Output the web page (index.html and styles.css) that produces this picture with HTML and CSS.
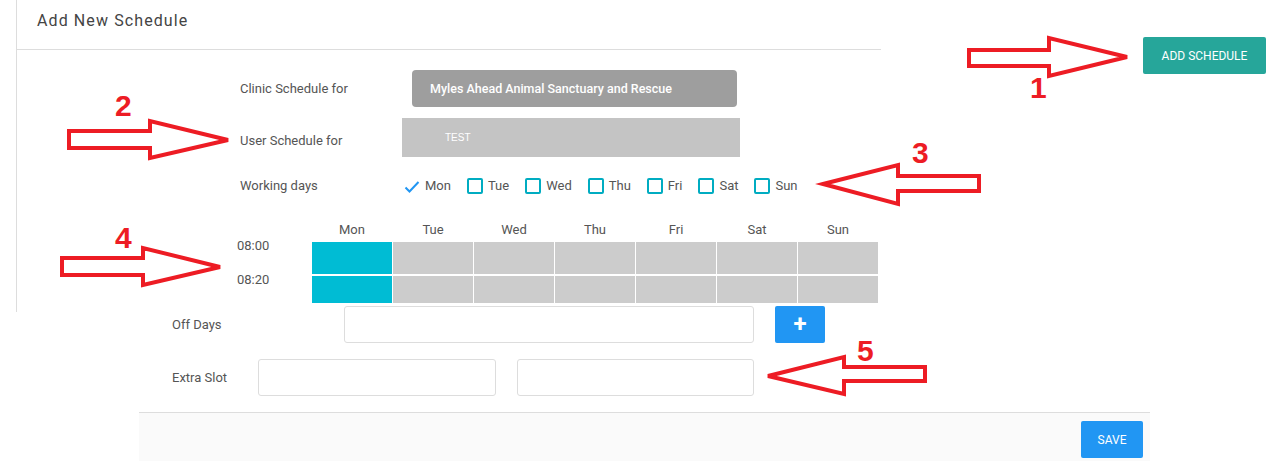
FILE: index.html
```html
<!DOCTYPE html>
<html>
<head>
<meta charset="utf-8">
<title>Add New Schedule</title>
<link rel="stylesheet" href="styles.css">
</head>
<body>
<div class="page">
  <div class="top">
    <section class="panel">
      <div class="panel-head">Add New Schedule</div>
      <div class="panel-body">
        <div class="row row-clinic">
          <div class="label">Clinic Schedule for</div>
          <div class="select-clinic">Myles Ahead Animal Sanctuary and Rescue</div>
        </div>
        <div class="row row-user">
          <div class="label label-user">User Schedule for</div>
          <div class="select-user">TEST</div>
        </div>
        <div class="row row-days">
          <div class="label">Working days</div>
          <div class="days">
            <span class="day"><svg class="tick" width="16" height="16" viewBox="0 0 16 16"><path d="M1.5 9.5 L5.5 13.5 L14.5 4" fill="none" stroke="#2196f3" stroke-width="2"/></svg>Mon</span>
            <span class="day"><span class="box"></span>Tue</span>
            <span class="day"><span class="box"></span>Wed</span>
            <span class="day"><span class="box"></span>Thu</span>
            <span class="day"><span class="box"></span>Fri</span>
            <span class="day"><span class="box"></span>Sat</span>
            <span class="day"><span class="box"></span>Sun</span>
          </div>
        </div>
        <div class="schedule">
          <div class="corner"></div>
          <div class="dh">Mon</div><div class="dh">Tue</div><div class="dh">Wed</div><div class="dh">Thu</div><div class="dh">Fri</div><div class="dh">Sat</div><div class="dh">Sun</div>
          <div class="time">08:00</div>
          <div class="cell on"></div><div class="cell"></div><div class="cell"></div><div class="cell"></div><div class="cell"></div><div class="cell"></div><div class="cell"></div>
          <div class="time">08:20</div>
          <div class="cell on"></div><div class="cell"></div><div class="cell"></div><div class="cell"></div><div class="cell"></div><div class="cell"></div><div class="cell"></div>
        </div>
      </div>
    </section>
    <div class="aside">
      <button class="btn btn-add">ADD SCHEDULE</button>
    </div>
  </div>

  <div class="bottom">
    <div class="frow">
      <div class="flabel flabel-wide">Off Days</div>
      <div class="input input-off"></div>
      <button class="btn btn-plus">+</button>
    </div>
    <div class="frow frow-extra">
      <div class="flabel flabel-narrow">Extra Slot</div>
      <div class="input input-slot"></div>
      <div class="input input-slot2"></div>
    </div>
    <footer class="foot">
      <button class="btn btn-save">SAVE</button>
    </footer>
  </div>
</div>

<svg class="annotations" width="1269" height="461" viewBox="0 0 1269 461">
  <g fill="none" stroke="#ed1c24" stroke-width="4" stroke-linejoin="miter">
    <polygon points="969,50 1049,50 1049,38 1127,57 1049,76 1049,66 969,66"/>
    <polygon points="69,131 150,131 150,121 228,140 150,158 150,148 69,148"/>
    <polygon points="823,184 898,165 898,176 979,176 979,191 898,191 898,204"/>
    <polygon points="62,258 143,258 143,248 220,267 143,285 143,275 62,275"/>
    <polygon points="768,376 844,357 844,367 925,367 925,381 844,381 844,394"/>
  </g>
  <g class="nums" fill="#ed1c24">
    <text x="1030" y="98">1</text>
    <text x="115" y="116">2</text>
    <text x="912" y="163">3</text>
    <text x="115" y="248">4</text>
    <text x="857" y="361">5</text>
  </g>
</svg>
</body>
</html>
```

FILE: styles.css
```css
* { box-sizing: border-box; }

html, body {
  margin: 0;
  padding: 0;
  background: #ffffff;
}

body {
  font-family: Roboto, "Noto Sans", "Liberation Sans", sans-serif;
  font-size: 13px;
  color: #555555;
  width: 1269px;
  height: 461px;
  overflow: hidden;
  position: relative;
}

.page {
  width: 1269px;
}

.top {
  display: flex;
  align-items: flex-start;
}

.panel {
  margin-left: 16px;
  width: 865px;
  height: 312px;
  border-left: 1px solid #dddddd;
  flex: none;
}

.panel-head {
  height: 50px;
  border-bottom: 1px solid #dddddd;
  padding: 9px 0 0 20px;
  font-size: 16px;
  line-height: 24px;
  letter-spacing: 1.1px;
  color: #444444;
}

.panel-body {
  padding-left: 223px;
}

.row {
  display: flex;
  align-items: center;
}

.label {
  width: 172px;
  flex: none;
  line-height: 20px;
  color: #555555;
}

.row-clinic {
  margin-top: 20px;
  height: 37px;
}

.select-clinic {
  width: 325px;
  height: 37px;
  background: #9e9e9e;
  border-radius: 4px;
  color: #ffffff;
  font-weight: 500;
  font-size: 12.5px;
  line-height: 37px;
  padding-left: 18px;
}

.row-user {
  margin-top: 11px;
  height: 39px;
}

.label-user {
  padding-top: 7px;
}

.select-user {
  margin-left: -10px;
  width: 338px;
  height: 39px;
  background: #c4c4c4;
  color: #ffffff;
  font-family: "Liberation Sans", Arial, sans-serif;
  font-size: 10px;
  line-height: 39px;
  padding-left: 43px;
}

.row-days {
  margin-top: 19px;
  height: 20px;
}

.days {
  margin-left: -8px;
  display: flex;
  align-items: center;
  gap: 16px;
}

.day {
  display: flex;
  align-items: center;
  gap: 5px;
  line-height: 20px;
  color: #555555;
}

.tick {
  display: block;
  flex: none;
}

.box {
  display: block;
  width: 16px;
  height: 16px;
  border: 2px solid #00acc1;
  border-radius: 2px;
  flex: none;
}

.schedule {
  margin-top: 24px;
  margin-left: -3px;
  display: grid;
  grid-template-columns: 74px repeat(7, 80px);
  grid-template-rows: 20px 32px 27px;
  column-gap: 1px;
  row-gap: 2px;
}

.schedule .corner {
  grid-column: 1;
}

.dh {
  text-align: center;
  line-height: 20px;
  color: #555555;
}

.time {
  line-height: 16px;
  margin-top: -4px;
  color: #555555;
  margin-right: -2px;
}

.cell {
  background: #cccccc;
}

.cell.on {
  background: #00bcd4;
}

.aside {
  flex: 1;
  display: flex;
  justify-content: flex-end;
  padding-right: 3px;
}

.btn {
  border: none;
  font-family: Roboto, "Noto Sans", sans-serif;
  color: #ffffff;
  border-radius: 2px;
  padding: 0;
  cursor: pointer;
}

.btn-add {
  margin-top: 37px;
  width: 123px;
  height: 37px;
  background: #26a69a;
  font-size: 12px;
}

.bottom {
  margin-top: -6px;
  margin-left: 139px;
  width: 1011px;
}

.frow {
  display: flex;
  align-items: center;
  padding-left: 33px;
  height: 37px;
}

.frow-extra {
  margin-top: 16px;
}

.flabel {
  flex: none;
  color: #555555;
  line-height: 20px;
}

.flabel-wide { width: 172px; }
.flabel-narrow { width: 86px; }

.input {
  height: 37px;
  border: 1px solid #dddddd;
  border-radius: 3px;
  background: #ffffff;
  flex: none;
}

.input-off { width: 410px; }
.input-slot { width: 238px; }
.input-slot2 { width: 237px; margin-left: 21px; }

.btn-plus {
  margin-left: 21px;
  width: 50px;
  height: 37px;
  background: #2196f3;
  font-size: 24px;
  font-weight: 700;
  line-height: 37px;
}

.foot {
  margin-top: 16px;
  border-top: 1px solid #dddddd;
  background: #fafafa;
  height: 49px;
  display: flex;
  justify-content: flex-end;
  padding: 8px 7px 0 0;
}

.btn-save {
  width: 62px;
  height: 37px;
  background: #2196f3;
  font-size: 12px;
}

.annotations {
  position: absolute;
  left: 0;
  top: 0;
  pointer-events: none;
}

.nums text {
  font-family: "Liberation Sans", Arial, sans-serif;
  font-weight: 700;
  font-size: 30px;
}
```
